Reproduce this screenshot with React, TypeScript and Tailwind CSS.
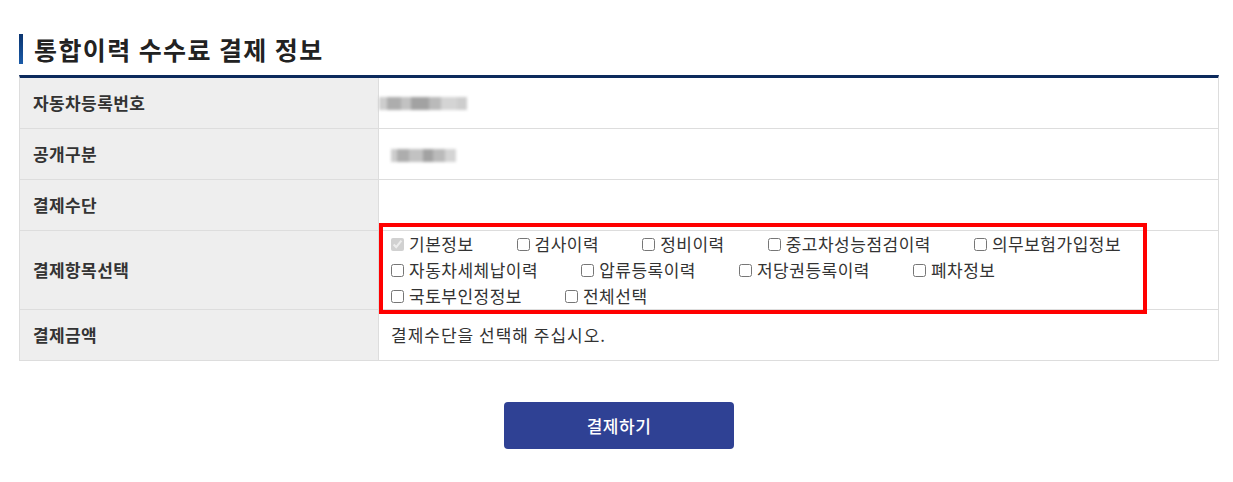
import React from "react";

const items = [
  ["기본정보", "검사이력", "정비이력", "중고차성능점검이력", "의무보험가입정보"],
  ["자동차세체납이력", "압류등록이력", "저당권등록이력", "폐차정보"],
  ["국토부인정정보", "전체선택"],
];

function Blurred({ widths }: { widths: number[] }) {
  const shades = ["bg-[#cdcdcd]", "bg-[#adadad]", "bg-[#c2c2c2]", "bg-[#a2a2a2]", "bg-[#bababa]", "bg-[#d4d4d4]"];
  return (
    <div className="flex items-center blur-[1.5px]">
      {widths.map((w, i) => (
        <div key={i} className={`h-[13px] ${shades[i % shades.length]}`} style={{ width: w }} />
      ))}
    </div>
  );
}

function Row({ label, children, tall }: { label: string; children?: React.ReactNode; tall?: boolean }) {
  return (
    <div className={`flex border-b border-[#dddddd] ${tall ? "h-[79px]" : "h-[51px]"}`}>
      <div className="w-[359px] shrink-0 bg-[#eeeeee] border-r border-[#dddddd] pl-[13px] flex items-center font-bold text-[17px] tracking-[0.4px] text-[#333333]">
        {label}
      </div>
      <div className="flex-1 flex items-center pl-[12px] text-[17px] tracking-[0.5px] text-[#333333]">{children}</div>
    </div>
  );
}

export default function App() {
  return (
    <div className="bg-white w-[1233px] h-[482px] pt-[33px] pl-[19px]" style={{ fontFamily: '"Noto Sans CJK KR", "Noto Sans", sans-serif' }}>
      <div className="w-[1200px]">
        <div className="flex items-center h-[31px]">
          <div className="w-[4px] h-[30px] bg-gradient-to-b from-[#0b3570] to-[#1a5ba8]" />
          <h2 className="ml-[11px] text-[25px] leading-[30px] font-bold text-[#222222] tracking-[1.4px]">통합이력 수수료 결제 정보</h2>
        </div>

        <div className="relative mt-[11px] border-t-[3px] border-[#0c2a5c] border-l border-r border-l-[#dddddd] border-r-[#dddddd]">
          <Row label="자동차등록번호">
            <div className="-ml-[12px]">
              <Blurred widths={[8, 14, 10, 18, 12, 16, 10]} />
            </div>
          </Row>
          <Row label="공개구분">
            <div className="pt-[3px]">
              <Blurred widths={[6, 12, 14, 10, 12, 11]} />
            </div>
          </Row>
          <Row label="결제수단" />
          <Row label="결제항목선택" tall>
            <div className="flex flex-col">
              {items.map((line, li) => (
                <div key={li} className="flex h-[26px] items-center">
                  {line.map((t, i) => (
                    <label key={t} className="flex items-center mr-[43px]">
                      <input
                        type="checkbox"
                        className="w-[13px] h-[13px] m-0 mr-[5px]"
                        defaultChecked={li === 0 && i === 0}
                        disabled={li === 0 && i === 0}
                      />
                      {t}
                    </label>
                  ))}
                </div>
              ))}
            </div>
          </Row>
          <Row label="결제금액">
            <span className="tracking-[1px]">결제수단을 선택해 주십시오.</span>
          </Row>

          <div className="absolute left-[359px] top-[145px] w-[768px] h-[91px] border-4 border-[#ff0000]" />
        </div>

        <div className="flex justify-center mt-[41px]">
          <button className="w-[230px] h-[47px] rounded-[4px] bg-[#2f4194] text-white text-[17px] tracking-[0.5px] font-medium">결제하기</button>
        </div>
      </div>
    </div>
  );
}
